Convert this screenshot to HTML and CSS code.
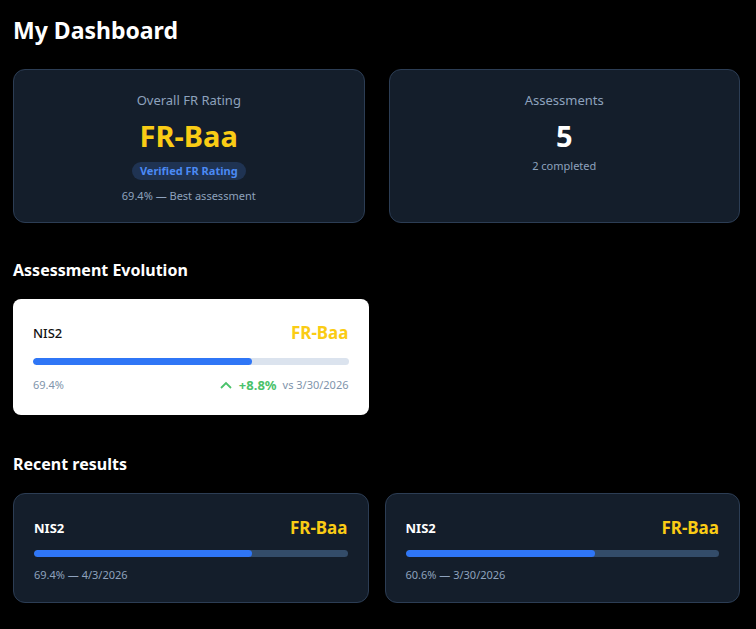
FILE: index.html
```html
<!DOCTYPE html>
<html lang="en">
<head>
    <meta charset="UTF-8">
    <title>My Dashboard</title>
    <link rel="stylesheet" href="styles.css">
</head>
<body>
    <div class="page">
        <h1>My Dashboard</h1>

        <div class="stats">
            <div class="card stat">
                <div class="stat-label">Overall FR Rating</div>
                <div class="stat-value rating">FR-Baa</div>
                <span class="badge">Verified FR Rating</span>
                <div class="stat-sub">69.4% — Best assessment</div>
            </div>
            <div class="card stat">
                <div class="stat-label">Assessments</div>
                <div class="stat-value">5</div>
                <div class="stat-sub count">2 completed</div>
            </div>
        </div>

        <h2>Assessment Evolution</h2>
        <div class="grid">
            <div class="evo">
                <div class="row">
                    <span class="name">NIS2</span>
                    <span class="grade">FR-Baa</span>
                </div>
                <div class="bar light"><div class="fill" style="width:69.4%"></div></div>
                <div class="row meta">
                    <span>69.4%</span>
                    <span class="delta">
                        <svg width="14" height="10" viewBox="0 0 14 10"><path d="M2 8 L7 3 L12 8" fill="none" stroke="#4ac26b" stroke-width="1.8"/></svg>
                        <b>+8.8%</b>
                        <span>vs 3/30/2026</span>
                    </span>
                </div>
            </div>
        </div>

        <h2>Recent results</h2>
        <div class="grid last">
            <div class="card result">
                <div class="row">
                    <span class="name">NIS2</span>
                    <span class="grade">FR-Baa</span>
                </div>
                <div class="bar"><div class="fill" style="width:69.4%"></div></div>
                <div class="meta">69.4% — 4/3/2026</div>
            </div>
            <div class="card result">
                <div class="row">
                    <span class="name">NIS2</span>
                    <span class="grade">FR-Baa</span>
                </div>
                <div class="bar"><div class="fill" style="width:60.6%"></div></div>
                <div class="meta">60.6% — 3/30/2026</div>
            </div>
        </div>
    </div>
</body>
</html>
```

FILE: styles.css
```css
*{margin:0;padding:0;box-sizing:border-box;}
body{background:#000;color:#fff;font-family:"Noto Sans","Open Sans",sans-serif;}
.page{padding:14px 16px 0 13px;}
h1{font-size:23px;font-weight:700;line-height:32px;margin-bottom:23px;}
h2{font-size:16px;font-weight:700;line-height:22px;margin-bottom:18px;}

.card{background:#141e2b;border:1px solid #2c3d54;border-radius:12px;}

.stats{display:grid;grid-template-columns:1fr 1fr;gap:24px;margin-bottom:36px;}
.stat{height:154px;display:flex;flex-direction:column;align-items:center;padding-top:21px;}
.stat-label{font-size:13px;color:#8ea2bd;line-height:18px;}
.stat-value{font-size:29px;font-weight:700;line-height:38px;margin-top:8px;}
.stat-value.rating{color:#facc15;}
.badge{background:#1f3352;color:#4b8af5;font-size:11px;font-weight:700;padding:1px 8px;border-radius:10px;line-height:16px;margin-top:7px;}
.stat-sub{font-size:11px;color:#8ea2bd;line-height:16px;margin-top:8px;}
.stat-sub.count{margin-top:3px;}

.grid{display:grid;grid-template-columns:1fr 1fr;gap:16px;margin-bottom:38px;}
.grid.last{margin-bottom:0;}

.row{display:flex;justify-content:space-between;align-items:center;}
.name{font-size:13px;font-weight:500;}
.grade{font-size:17px;font-weight:700;color:#facc15;}

.evo{background:#fff;color:#111;border-radius:8px;padding:22px 20px 20px 20px;height:116px;}
.evo .name{color:#111;}

.bar{height:7px;border-radius:4px;background:#334c69;margin:14px 0 12px;overflow:hidden;}
.bar.light{background:#dbe3ee;}
.fill{height:100%;background:#2f76f6;border-radius:4px;}

.meta{font-size:11px;color:#8ea2bd;line-height:16px;}
.evo .meta{color:#8094ab;}
.delta{display:flex;align-items:center;gap:6px;}
.delta b{color:#4ac26b;font-size:13px;}

.result{padding:22px 20px 20px 20px;height:110px;}
.result .name{font-weight:700;}
.result .bar{margin:11px 0 10px;}
```
